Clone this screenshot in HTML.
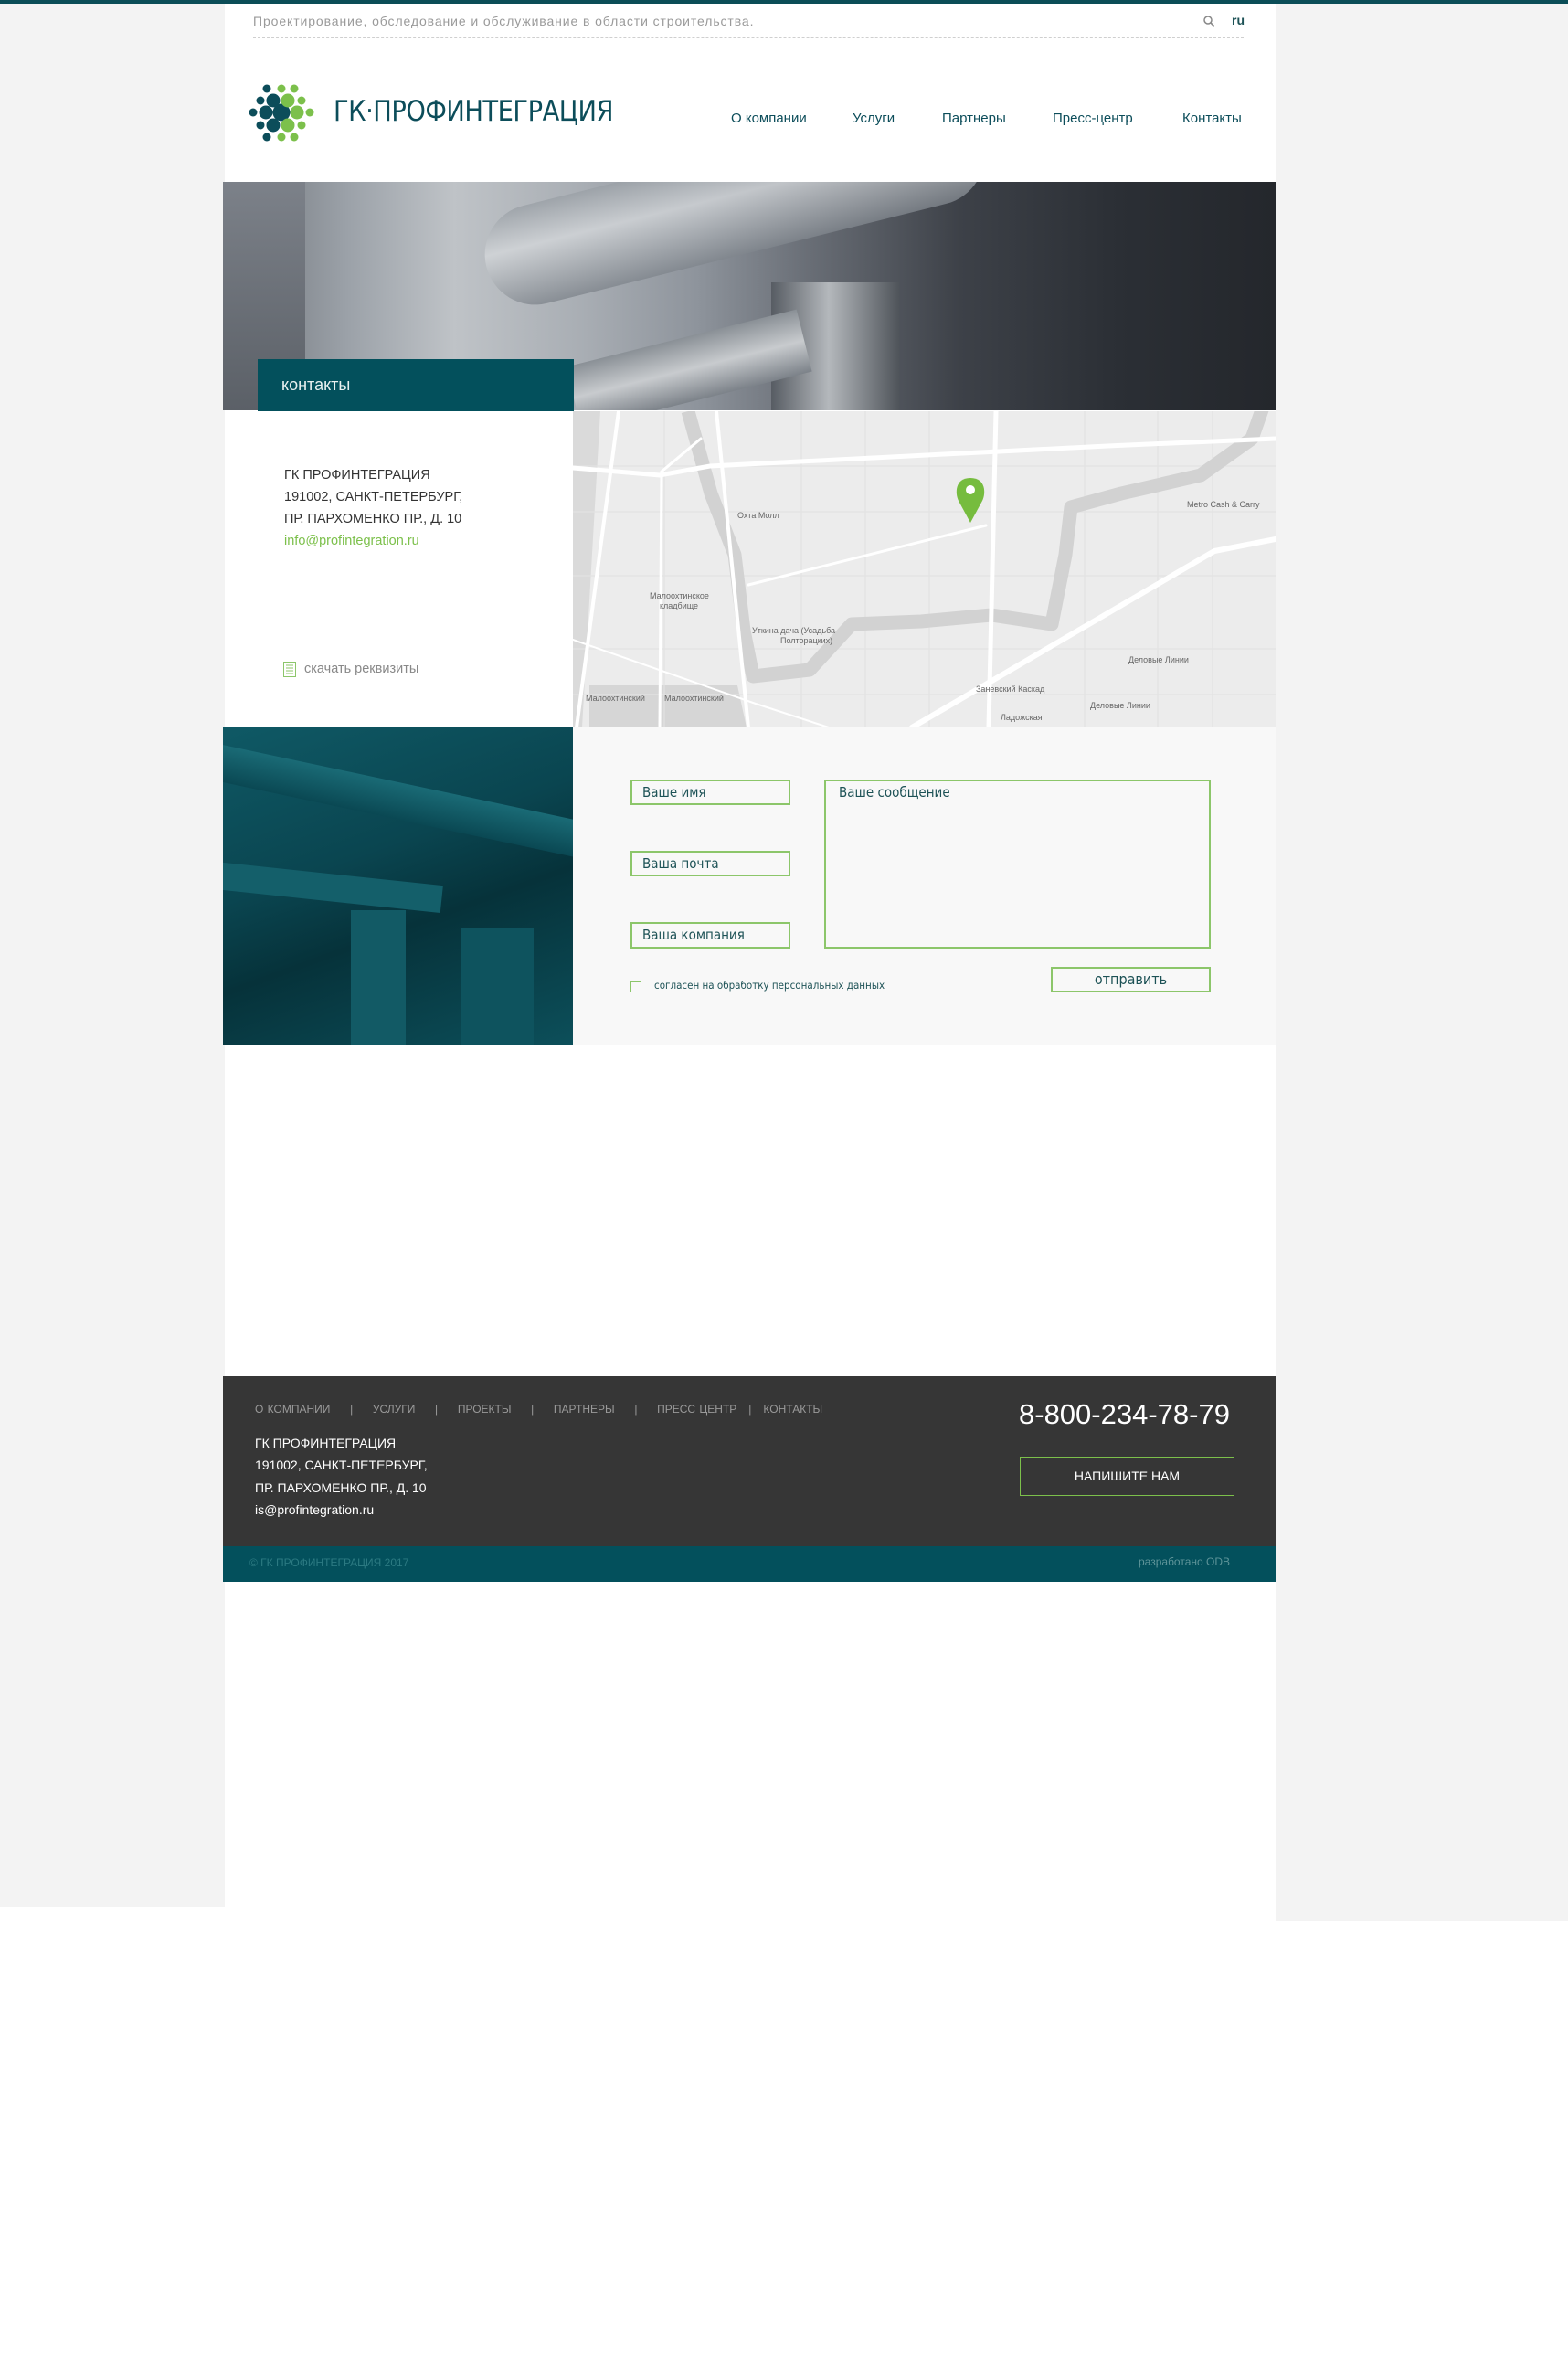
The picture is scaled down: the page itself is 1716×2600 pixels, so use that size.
<!DOCTYPE html>
<html><head><meta charset="utf-8">
<style>
*{margin:0;padding:0;box-sizing:border-box}
body{width:1716px;height:2600px;background:#fff;position:relative;overflow:hidden;font-family:"Liberation Sans","DejaVu Sans",sans-serif}
.a{position:absolute}
.t{white-space:nowrap}
.inp{position:absolute;border:2px solid #8cc66a;background:#f8f8f8;color:#1d5256;font-size:15px;padding:3px 0 0 11px;font-family:"DejaVu Sans Condensed","Liberation Sans",sans-serif}
</style></head><body>
<div class="a" style="left:0;top:0;width:246px;height:2087px;background:#f3f3f3"></div>
<div class="a" style="left:1396px;top:0;width:320px;height:2102px;background:#f3f3f3"></div>
<div class="a" style="left:0;top:0;width:1716px;height:4px;background:#0b4d57"></div>

<div class="a t" style="left:277px;top:15px;font-size:14px;color:#9a9a9a;letter-spacing:0.9px">Проектирование, обследование и обслуживание в области строительства.</div>
<svg class="a" style="left:1316px;top:16px" width="14" height="14" viewBox="0 0 14 14"><circle cx="6" cy="6" r="4" fill="none" stroke="#888" stroke-width="1.5"/><path d="M9 9 L12.5 12.5" stroke="#888" stroke-width="1.6"/></svg>
<div class="a t" style="left:1348px;top:14px;font-size:14px;color:#1d5256;font-weight:bold">ru</div>
<div class="a" style="left:277px;top:41px;width:1084px;border-top:1px dashed #cfcfcf"></div>

<svg class="a" style="left:268px;top:88px" width="80" height="72" viewBox="268 88 80 72">
<g fill="#0c4d5a">
<circle cx="292" cy="97" r="4.5"/><circle cx="285" cy="110" r="4.5"/><circle cx="299" cy="110" r="7.5"/>
<circle cx="277" cy="123" r="4.5"/><circle cx="291" cy="123" r="7.5"/><circle cx="308" cy="123" r="9.5"/>
<circle cx="285" cy="137" r="4.5"/><circle cx="299" cy="137" r="7.5"/><circle cx="292" cy="150" r="4.5"/>
</g>
<g fill="#7cc04b">
<circle cx="308" cy="97" r="4.5"/><circle cx="322" cy="97" r="4.5"/><circle cx="315" cy="110" r="7.5"/><circle cx="330" cy="110" r="4.5"/>
<circle cx="325" cy="123" r="7.5"/><circle cx="339" cy="123" r="4.5"/><circle cx="315" cy="137" r="7.5"/><circle cx="330" cy="137" r="4.5"/>
<circle cx="308" cy="150" r="4.5"/><circle cx="322" cy="150" r="4.5"/>
</g></svg>
<div class="a t" style="left:365px;top:104px;font-size:31px;color:#0c4d5a;font-family:'DejaVu Sans Condensed','Liberation Sans Narrow',sans-serif;font-weight:200;letter-spacing:-0.5px;transform:scaleX(0.98);transform-origin:left">ГК·ПРОФИНТЕГРАЦИЯ</div>

<div class="a t" style="left:800px;top:121px;font-size:15px;color:#0c4d5a">О компании</div>
<div class="a t" style="left:933px;top:121px;font-size:15px;color:#0c4d5a">Услуги</div>
<div class="a t" style="left:1031px;top:121px;font-size:15px;color:#0c4d5a">Партнеры</div>
<div class="a t" style="left:1152px;top:121px;font-size:15px;color:#0c4d5a">Пресс-центр</div>
<div class="a t" style="left:1294px;top:121px;font-size:15px;color:#0c4d5a">Контакты</div>

<!-- hero -->
<div class="a" style="left:244px;top:199px;width:1152px;height:250px;overflow:hidden;background:linear-gradient(90deg,#6d7278 0%,#9ca2a9 12%,#bfc3c7 22%,#a9aeb4 34%,#8e949c 45%,#6b7078 55%,#3d4148 70%,#2b2f35 85%,#24272c 100%)">
<div class="a" style="left:0;top:0;width:90px;height:250px;background:linear-gradient(180deg,#7c8189,#5b6067)"></div>
<div class="a" style="left:280px;top:-30px;width:560px;height:110px;border-radius:55px;transform:rotate(-14deg);background:linear-gradient(180deg,#9aa0a6,#d4d7da 40%,#80868d 100%);opacity:.8"></div>
<div class="a" style="left:600px;top:110px;width:140px;height:150px;background:linear-gradient(90deg,#575c63,#b4b8bc 45%,#4f545a)"></div>
<div class="a" style="left:380px;top:170px;width:260px;height:70px;transform:rotate(-14deg);background:linear-gradient(180deg,#8a9096,#c8cbce 50%,#7c8289)"></div>
</div>
<div class="a" style="left:282px;top:393px;width:346px;height:57px;background:#03505c"></div>
<div class="a t" style="left:308px;top:411px;font-size:18px;color:#e8f0f0">контакты</div>

<!-- contact info -->
<div class="a" style="left:311px;top:508px;font-size:14.5px;color:#333;line-height:24px;font-family:'Liberation Sans Narrow','Liberation Sans',sans-serif">ГК ПРОФИНТЕГРАЦИЯ<br>191002, САНКТ-ПЕТЕРБУРГ,<br>ПР. ПАРХОМЕНКО ПР., Д. 10<br><span style="color:#7cc04b">info@profintegration.ru</span></div>
<svg class="a" style="left:310px;top:724px" width="14" height="17"><rect x="0.5" y="0.5" width="13" height="16" fill="none" stroke="#8cc66a"/><path d="M3 4h8M3 7h8M3 10h8M3 13h8" stroke="#8cc66a"/></svg>
<div class="a t" style="left:333px;top:724px;font-size:14.5px;color:#888">скачать реквизиты</div>

<!-- map -->
<svg class="a" style="left:627px;top:450px" width="769" height="346" viewBox="0 0 769 346">
<rect width="769" height="346" fill="#ececec"/>
<path d="M0 0 L30 0 L10 346 L0 346Z" fill="#dadada"/>
<path d="M18 300 L180 300 L190 346 L18 346Z" fill="#d6d6d6"/>
<g stroke="#e2e2e2" stroke-width="1.2" fill="none">
<path d="M100 0V346M250 0V346M320 0V346M390 0V346M560 0V346M640 0V346M700 0V346M0 60H769M0 110H769M0 180H769M0 260H769M0 310H769"/>
</g>
<path d="M126 0 L151 90 L177 157 L187 240 L197 290 L259 283 L305 233 L381 230 L458 223 L524 233 L539 157 L545 105 L600 90 L687 70 L743 30 L757 -10" fill="none" stroke="#d2d2d2" stroke-width="15" stroke-linejoin="round"/>
<g stroke="#fff" fill="none" stroke-linecap="round">
<path d="M0 62 L95 70 L150 60 L585 38 L769 30" stroke-width="5"/>
<path d="M463 0 L455 346" stroke-width="5"/>
<path d="M157 0 L192 346" stroke-width="4"/>
<path d="M50 0 L4 346" stroke-width="4"/>
<path d="M97 66 L95 346" stroke-width="3"/>
<path d="M371 346 L702 153 L769 140" stroke-width="6"/>
<path d="M192 190 L452 125" stroke-width="3"/>
<path d="M140 30 L97 66" stroke-width="3"/>
<path d="M0 250 L200 320 L280 346" stroke-width="2"/>
</g>
<g font-family="Liberation Sans" font-size="9" fill="#666">
<text x="180" y="117">Охта Молл</text><text x="84" y="205">Малоохтинское</text><text x="95" y="216">кладбище</text>
<text x="196" y="243">Уткина дача (Усадьба</text><text x="227" y="254">Полторацких)</text>
<text x="672" y="105">Metro Cash &amp; Carry</text><text x="608" y="275">Деловые Линии</text><text x="566" y="325">Деловые Линии</text>
<text x="441" y="307">Заневский Каскад</text><text x="468" y="338">Ладожская</text>
<text x="14" y="317">Малоохтинский</text><text x="100" y="317">Малоохтинский</text>
</g>
<path d="M435 73 C418 73 418 90 422 98 L435 122 L448 98 C452 90 452 73 435 73Z" fill="#76bc3e"/>
<circle cx="435" cy="86" r="5" fill="#fff"/>
</svg>

<!-- teal image -->
<div class="a" style="left:244px;top:796px;width:383px;height:347px;overflow:hidden;background:linear-gradient(160deg,#0f5965 0%,#0a4550 40%,#06323a 60%,#0c4f5a 100%)">
<div class="a" style="left:-20px;top:60px;width:420px;height:40px;transform:rotate(12deg);background:linear-gradient(180deg,#1a6b76,#0a4853)"></div>
<div class="a" style="left:-10px;top:160px;width:250px;height:30px;transform:rotate(6deg);background:#145f6a"></div>
<div class="a" style="left:140px;top:200px;width:60px;height:150px;background:#125a65"></div>
<div class="a" style="left:260px;top:220px;width:80px;height:130px;background:#0e535e"></div>
</div>

<!-- form -->
<div class="a" style="left:627px;top:796px;width:769px;height:347px;background:#f8f8f8"></div>
<div class="inp" style="left:690px;top:853px;width:175px;height:28px">Ваше имя</div>
<div class="inp" style="left:690px;top:931px;width:175px;height:28px">Ваша почта</div>
<div class="inp" style="left:690px;top:1009px;width:175px;height:29px">Ваша компания</div>
<div class="inp" style="left:902px;top:853px;width:423px;height:185px;padding-left:14px">Ваше сообщение</div>
<div class="inp" style="left:1150px;top:1058px;width:175px;height:28px;text-align:center;padding:2px 0 0;font-size:16px">отправить</div>
<div class="a" style="left:690px;top:1074px;width:12px;height:12px;border:1px solid #8cc66a"></div>
<div class="a t" style="left:716px;top:1071px;font-size:11.5px;color:#1d5256;font-family:'DejaVu Sans Condensed','Liberation Sans',sans-serif">согласен на обработку персональных данных</div>

<!-- footer -->
<div class="a" style="left:244px;top:1506px;width:1152px;height:186px;background:#363636"></div>
<div class="a t" style="left:279px;top:1535px;font-size:12px;color:#9a9a9a;font-family:'Liberation Sans Narrow','Liberation Sans',sans-serif;word-spacing:1px">О КОМПАНИИ &nbsp;&nbsp;&nbsp;&nbsp;|&nbsp;&nbsp;&nbsp;&nbsp; УСЛУГИ &nbsp;&nbsp;&nbsp;&nbsp;|&nbsp;&nbsp;&nbsp;&nbsp; ПРОЕКТЫ &nbsp;&nbsp;&nbsp;&nbsp;|&nbsp;&nbsp;&nbsp;&nbsp; ПАРТНЕРЫ &nbsp;&nbsp;&nbsp;&nbsp;|&nbsp;&nbsp;&nbsp;&nbsp; ПРЕСС ЦЕНТР &nbsp;&nbsp;|&nbsp;&nbsp; КОНТАКТЫ</div>
<div class="a" style="left:279px;top:1567px;font-size:14px;color:#fff;line-height:24.3px;font-family:'Liberation Sans Narrow','Liberation Sans',sans-serif">ГК ПРОФИНТЕГРАЦИЯ<br>191002, САНКТ-ПЕТЕРБУРГ,<br>ПР. ПАРХОМЕНКО ПР., Д. 10<br>is@profintegration.ru</div>
<div class="a t" style="left:1115px;top:1530px;font-size:31px;color:#fff">8-800-234-78-79</div>
<div class="a" style="left:1116px;top:1594px;width:235px;height:43px;border:1.5px solid #7cc04b;color:#fff;font-size:14px;text-align:center;line-height:40px;font-family:'Liberation Sans Narrow','Liberation Sans',sans-serif">НАПИШИТЕ НАМ</div>
<div class="a" style="left:244px;top:1692px;width:1152px;height:39px;background:#03505c"></div>
<div class="a t" style="left:273px;top:1703px;font-size:12px;color:#2c7a82;font-family:'Liberation Sans Narrow','Liberation Sans',sans-serif">© ГК ПРОФИНТЕГРАЦИЯ 2017</div>
<div class="a t" style="left:1246px;top:1702px;font-size:12px;color:#5e9499;font-family:'Liberation Sans Narrow','Liberation Sans',sans-serif">разработано ODB</div>
</body></html>
